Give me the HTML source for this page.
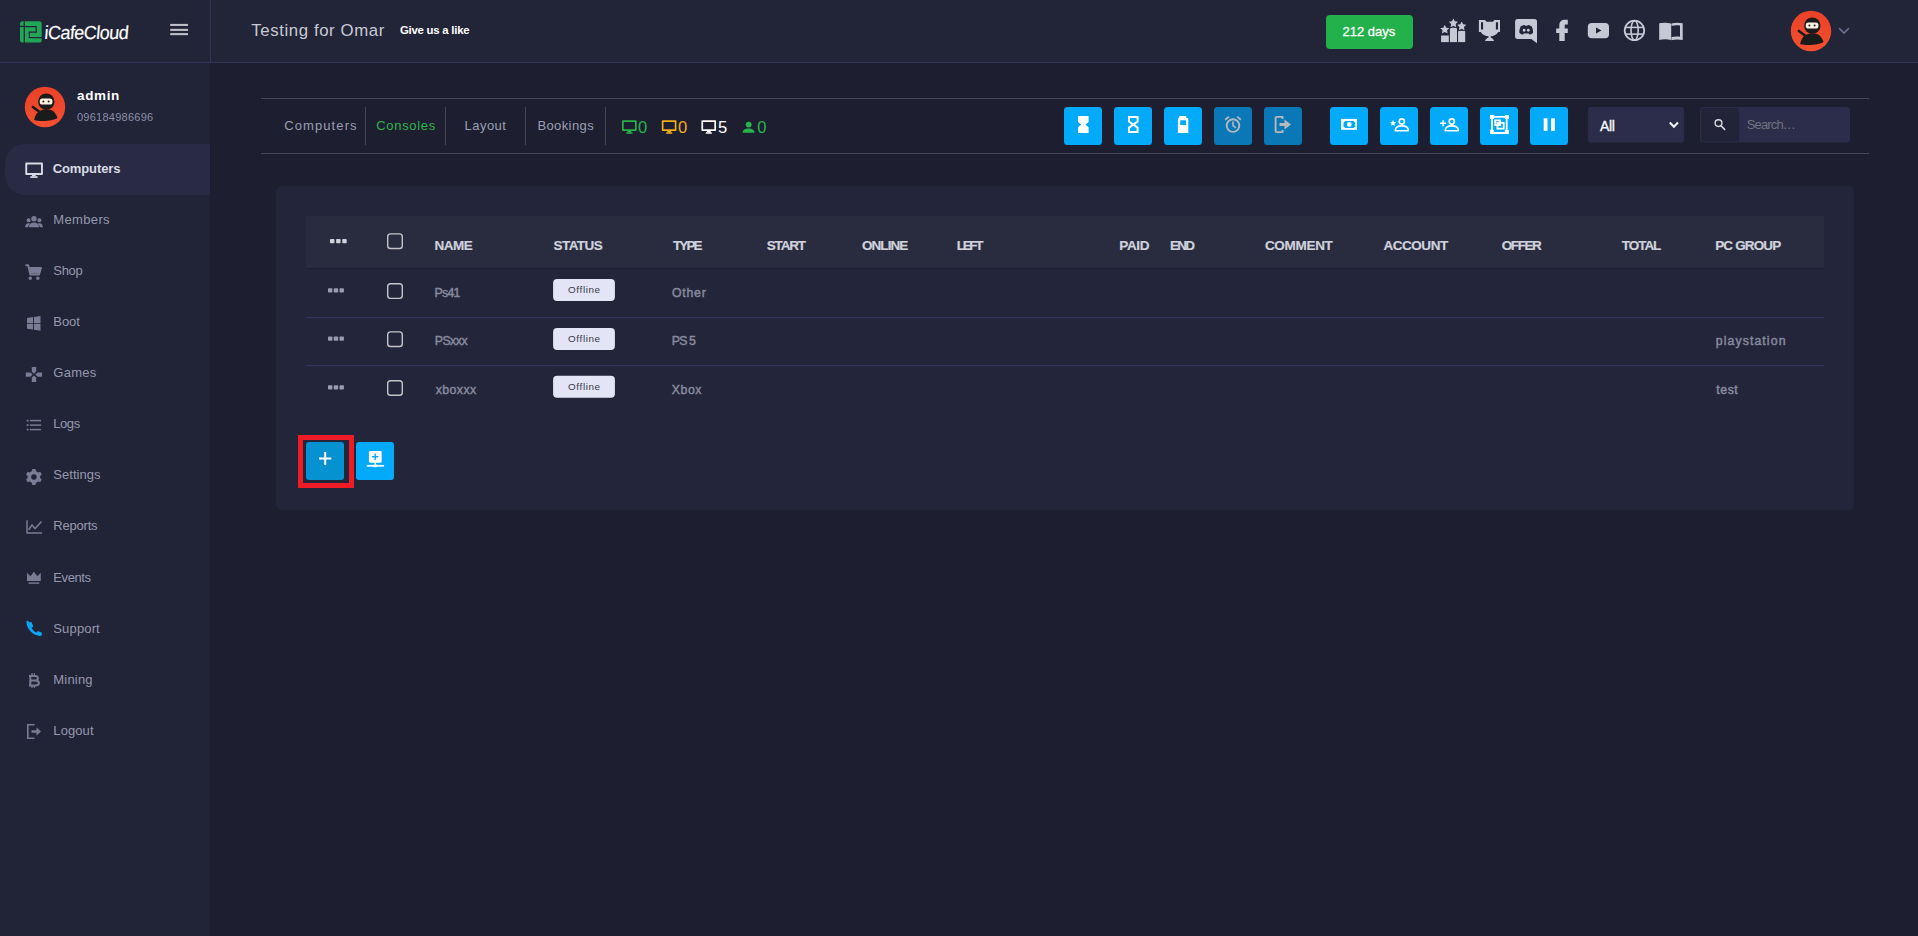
<!DOCTYPE html>
<html><head><meta charset="utf-8"><title>iCafeCloud</title>
<style>
html,body{margin:0;padding:0;}
body{width:1918px;height:936px;overflow:hidden;position:relative;background:#1d1e2f;font-family:"Liberation Sans",sans-serif;}
#t span{position:absolute;line-height:1;white-space:pre;transform-origin:0 0;}
</style></head><body>
<svg width="1918" height="936" viewBox="0 0 1918 936" style="position:absolute;left:0;top:0"><rect x="0" y="0" width="1918" height="936" rx="0" fill="#1d1e2f" /><rect x="0" y="0" width="1918" height="62" rx="0" fill="#222437" /><rect x="0" y="62" width="1918" height="1" rx="0" fill="#30335a" /><rect x="210" y="0" width="1" height="62" rx="0" fill="#30335a" /><rect x="0" y="63" width="210" height="873" rx="0" fill="#212337" /><path d="M25,144 H210 V195 H25 A20,20 0 0 1 5,175 V164 A20,20 0 0 1 25,144 Z" fill="#292b45" stroke="none" stroke-width="0" /><rect x="170.2" y="23.9" width="17.8" height="2.05" rx="0" fill="#c0c1c8" /><rect x="170.2" y="28.85" width="17.8" height="2.05" rx="0" fill="#c0c1c8" /><rect x="170.2" y="33.1" width="17.8" height="2.05" rx="0" fill="#c0c1c8" /><rect x="20" y="21.3" width="21.7" height="21.2" rx="2.6" fill="#21a556" /><path d="M24.3,20.5 V43.5 M19.5,26.4 H24.3 M24.3,26.7 H36.2 V32.1 H29.3 V37.5 H42.5" fill="none" stroke="#222437" stroke-width="1.25" /><rect x="1326" y="15" width="87" height="34" rx="4" fill="#23b14b" /><rect x="1441.1" y="35.5" width="7.7" height="6.6" rx="0" fill="#c6c9d5" /><rect x="1449.9" y="27.7" width="7.1" height="14.4" rx="0" fill="#c6c9d5" /><rect x="1458.1" y="30.8" width="7.1" height="11.3" rx="0" fill="#c6c9d5" /><polygon points="1444.80,23.70 1446.62,27.39 1450.70,27.98 1447.75,30.86 1448.44,34.92 1444.80,33.00 1441.16,34.92 1441.85,30.86 1438.90,27.98 1442.98,27.39" fill="#222437"/><polygon points="1444.80,24.80 1446.21,27.66 1449.37,28.12 1447.08,30.34 1447.62,33.48 1444.80,32.00 1441.98,33.48 1442.52,30.34 1440.23,28.12 1443.39,27.66" fill="#c6c9d5"/><polygon points="1453.40,17.40 1455.22,21.09 1459.30,21.68 1456.35,24.56 1457.04,28.62 1453.40,26.70 1449.76,28.62 1450.45,24.56 1447.50,21.68 1451.58,21.09" fill="#222437"/><polygon points="1453.40,18.50 1454.81,21.36 1457.97,21.82 1455.68,24.04 1456.22,27.18 1453.40,25.70 1450.58,27.18 1451.12,24.04 1448.83,21.82 1451.99,21.36" fill="#c6c9d5"/><polygon points="1461.70,20.40 1463.52,24.09 1467.60,24.68 1464.65,27.56 1465.34,31.62 1461.70,29.70 1458.06,31.62 1458.75,27.56 1455.80,24.68 1459.88,24.09" fill="#222437"/><polygon points="1461.70,21.50 1463.11,24.36 1466.27,24.82 1463.98,27.04 1464.52,30.18 1461.70,28.70 1458.88,30.18 1459.42,27.04 1457.13,24.82 1460.29,24.36" fill="#c6c9d5"/><path d="M1478.9,20 H1485 L1486.5,21.7 H1492.9 L1494.4,20 H1500 V31.9 H1498.2 C1497,34.5 1493.5,36 1490.8,36.3 V37.8 C1492,38 1493.5,39 1494,41 H1485 C1485.5,39 1487,38 1488.5,37.8 V36.3 C1485.5,36 1482,34.5 1480.8,31.9 H1478.9 Z M1481,22.2 V29.5 H1483.1 V22.2 Z M1495.9,22.2 V29.5 H1498 V22.2 Z" fill="#c6c9d5" stroke="none" stroke-width="0" fill-rule="evenodd"/><path d="M1517.6,18.9 H1534.5 A2.5,2.5 0 0 1 1537,21.4 V43.2 L1531.3,39.1 H1517.6 A2.5,2.5 0 0 1 1515.1,36.6 V21.4 A2.5,2.5 0 0 1 1517.6,18.9 Z" fill="#c6c9d5" stroke="none" stroke-width="0" /><path d="M1520.8,26.2 C1522.5,25.2 1524,24.9 1524.6,24.9 L1525.1,25.7 C1525.7,25.6 1526.7,25.6 1527.3,25.7 L1527.8,24.9 C1528.4,24.9 1529.9,25.2 1531.6,26.2 C1532.7,28.2 1533.2,30.4 1533,32.9 C1531.6,33.9 1530.2,34.4 1529.2,34.5 L1528.4,33.3 C1527,33.7 1525.4,33.7 1524,33.3 L1523.2,34.5 C1522.2,34.4 1520.8,33.9 1519.4,32.9 C1519.2,30.4 1519.7,28.2 1520.8,26.2 Z" fill="#222437" stroke="none" stroke-width="0" /><ellipse cx="1524.1" cy="30.3" rx="1.35" ry="1.45" fill="#c6c9d5"/><ellipse cx="1528.3" cy="30.3" rx="1.35" ry="1.45" fill="#c6c9d5"/><path d="M1559.3,41 V33 H1556.2 V28.4 H1559.3 V25.5 C1559.3,21.8 1561.5,19.8 1565,19.8 H1567.8 V24.6 H1565.8 C1565,24.6 1564.7,25 1564.7,25.8 V28.4 H1567.8 V33 H1564.7 V41 Z" fill="#c6c9d5" stroke="none" stroke-width="0" /><rect x="1587.8" y="23" width="21.2" height="15.2" rx="4" fill="#c6c9d5" /><path d="M1596,27.6 L1601.5,30.6 L1596,33.6 Z" fill="#222437" stroke="none" stroke-width="0" /><circle cx="1634.45" cy="30.45" r="9.75" fill="none" stroke="#c6c9d5" stroke-width="1.8"/><ellipse cx="1634.6" cy="30.45" rx="3.6" ry="9.75" fill="none" stroke="#c6c9d5" stroke-width="1.6"/><rect x="1625" y="26.6" width="19" height="1.6" rx="0" fill="#c6c9d5" /><rect x="1625" y="33.3" width="19" height="1.6" rx="0" fill="#c6c9d5" /><path d="M1659.2,23.2 C1662.5,22.4 1667.5,22.4 1671,23.6 V40 C1667.5,39 1662.5,39 1659.2,40 Z" fill="#c6c9d5" stroke="none" stroke-width="0" /><path d="M1671.4,23.6 C1674.5,22.5 1679,22.5 1682.7,23.2 V40 C1679,39.2 1674.5,39.2 1671.4,40.3 Z M1671.6,25.8 V37 C1674.5,36.3 1677.5,36.3 1680,36.7 V25.4 C1677.5,25 1674.5,25 1671.6,25.8 Z" fill="#c6c9d5" stroke="none" stroke-width="0" fill-rule="evenodd"/><defs><linearGradient id="g1811" x1="0" y1="0" x2="0" y2="1"><stop offset="0" stop-color="#ea4129"/><stop offset="1" stop-color="#f4502f"/></linearGradient></defs><circle cx="1811" cy="31" r="20.2" fill="url(#g1811)"/><g transform="translate(1811,31) scale(1.01)"><line x1="-12" y1="0" x2="-6" y2="4.5" stroke="#1b1b1b" stroke-width="2.6" stroke-linecap="round"/><circle cx="1.3" cy="-5.3" r="8.1" fill="#1b1b1b"/><path d="M-10.8,12.8 C-9.5,5.5 -4.5,2.2 1.3,2.2 C7,2.2 11.2,5.5 12.3,11 C8,14 -5,14.8 -10.8,12.8 Z" fill="#1b1b1b"/><rect x="-5.2" y="-8.4" width="12.6" height="6" rx="2.6" fill="#fbf1e1"/><circle cx="-1.6" cy="-5.4" r="1" fill="#1b1b1b"/><circle cx="3.6" cy="-5.4" r="1" fill="#1b1b1b"/></g><defs><linearGradient id="g45" x1="0" y1="0" x2="0" y2="1"><stop offset="0" stop-color="#ea4129"/><stop offset="1" stop-color="#f4502f"/></linearGradient></defs><circle cx="45" cy="107" r="20.2" fill="url(#g45)"/><g transform="translate(45,107) scale(1.01)"><line x1="-12" y1="0" x2="-6" y2="4.5" stroke="#1b1b1b" stroke-width="2.6" stroke-linecap="round"/><circle cx="1.3" cy="-5.3" r="8.1" fill="#1b1b1b"/><path d="M-10.8,12.8 C-9.5,5.5 -4.5,2.2 1.3,2.2 C7,2.2 11.2,5.5 12.3,11 C8,14 -5,14.8 -10.8,12.8 Z" fill="#1b1b1b"/><rect x="-5.2" y="-8.4" width="12.6" height="6" rx="2.6" fill="#fbf1e1"/><circle cx="-1.6" cy="-5.4" r="1" fill="#1b1b1b"/><circle cx="3.6" cy="-5.4" r="1" fill="#1b1b1b"/></g><path d="M1839.2,28.2 L1844,33 L1848.8,28.2" fill="none" stroke="#6b7290" stroke-width="1.6" /><path d="M26.25,163.45 H41.95 V173.95 H26.25 Z" fill="none" stroke="#d9dbe6" stroke-width="1.9" stroke-linejoin="round"/><rect x="32" y="174.8" width="3.7" height="1.5" rx="0" fill="#d9dbe6" /><rect x="30.3" y="176.2" width="7.3" height="1.7" rx="0" fill="#d9dbe6" /><circle cx="34" cy="218.7" r="2.7" fill="#787c94"/><circle cx="28.6" cy="220.3" r="2" fill="#787c94"/><circle cx="39.4" cy="220.3" r="2" fill="#787c94"/><path d="M28.8,227.3 C29.2,224 31.5,222.6 34,222.6 C36.5,222.6 38.8,224 39.2,227.3 Z" fill="#787c94" stroke="none" stroke-width="0" /><path d="M25,227.3 C25.3,224.8 26.5,223.3 28.5,223.3 C29.5,223.3 30,223.5 30.3,223.7 C29,224.8 28.3,226 28.1,227.3 Z" fill="#787c94" stroke="none" stroke-width="0" /><path d="M43,227.3 C42.7,224.8 41.5,223.3 39.5,223.3 C38.5,223.3 38,223.5 37.7,223.7 C39,224.8 39.7,226 39.9,227.3 Z" fill="#787c94" stroke="none" stroke-width="0" /><path d="M25.5,265.3 H28.2 L30.3,274.5 H39 L41,268 H29" fill="none" stroke="#787c94" stroke-width="1.9" stroke-linejoin="round"/><path d="M29,268 H41 L39.2,273.5 H30.3 Z" fill="#787c94" stroke="none" stroke-width="0" /><circle cx="30.3" cy="278.2" r="1.7" fill="#787c94"/><circle cx="37.8" cy="278.2" r="1.7" fill="#787c94"/><path d="M27,318 L33,317.1 V322.9 H27 Z M33.9,317 L40.5,316 V322.9 H33.9 Z M27,323.8 H33 V329.6 L27,328.7 Z M33.9,323.8 H40.5 V330.7 L33.9,329.7 Z" fill="#787c94" stroke="none" stroke-width="0" /><path d="M31.8,367 H36.2 V371.6 L34,373.8 L31.8,371.6 Z M31.8,382 H36.2 V377.6 L34,375.4 L31.8,377.6 Z M25.8,372.4 H30.4 L32.6,374.6 L30.4,376.8 H25.8 Z M42,372.4 H37.6 L35.4,374.6 L37.6,376.8 H42 Z" fill="#787c94" stroke="none" stroke-width="0" /><rect x="26.7" y="419.70000000000005" width="1.8" height="1.8" rx="0" fill="#787c94" /><rect x="29.8" y="419.85" width="11.3" height="1.5" rx="0" fill="#787c94" /><rect x="26.7" y="424.20000000000005" width="1.8" height="1.8" rx="0" fill="#787c94" /><rect x="29.8" y="424.35" width="11.3" height="1.5" rx="0" fill="#787c94" /><rect x="26.7" y="428.70000000000005" width="1.8" height="1.8" rx="0" fill="#787c94" /><rect x="29.8" y="428.85" width="11.3" height="1.5" rx="0" fill="#787c94" /><g transform="translate(33.9,476.5)"><path d="M-1.6,-7.5 H1.6 L2.1,-5.3 C2.9,-5 3.6,-4.6 4.2,-4.1 L6.3,-4.8 L7.9,-2.1 L6.2,-0.6 C6.3,0.2 6.3,0.9 6.2,1.6 L7.9,3.1 L6.3,5.8 L4.2,5.1 C3.6,5.6 2.9,6 2.1,6.3 L1.6,8.5 H-1.6 L-2.1,6.3 C-2.9,6 -3.6,5.6 -4.2,5.1 L-6.3,5.8 L-7.9,3.1 L-6.2,1.6 C-6.3,0.9 -6.3,0.2 -6.2,-0.6 L-7.9,-2.1 L-6.3,-4.8 L-4.2,-4.1 C-3.6,-4.6 -2.9,-5 -2.1,-5.3 Z M0,-2.3 A2.8,2.8 0 1 0 0.01,-2.3 Z" fill="#787c94" fill-rule="evenodd"/></g><path d="M27,520.3 V533 H42" fill="none" stroke="#787c94" stroke-width="1.5" /><path d="M28.5,530 L32,525 L35,528.5 L41.5,521.5" fill="none" stroke="#787c94" stroke-width="1.5" /><path d="M27,572.8 L30.5,576.3 L33.9,571.8 L37.3,576.3 L40.8,572.8 V581 H27 Z" fill="#787c94" stroke="none" stroke-width="0" /><rect x="28.5" y="582.4" width="10.8" height="1.4" rx="0" fill="#787c94" /><path d="M29.4,622.2 L31.4,622 L33.3,626.2 L31.6,627.8 C32.6,629.9 34.2,631.6 36.3,632.6 L37.9,630.9 L42,632.8 L41.8,634.8 C41.6,635.6 41,636 40.2,636 C32.7,635.6 26.8,629.5 26.5,622.1 C26.5,621.3 27,620.8 27.8,620.6 Z" fill="#0ba5f4" stroke="none" stroke-width="0" /><path d="M30.3,675.2 V686.2 M29,676 H35 C36.9,676 37.9,676.9 37.9,678.3 C37.9,679.7 36.9,680.6 35,680.6 H30.3 M30.3,680.6 H35.6 C37.8,680.6 38.9,681.6 38.9,683.1 C38.9,684.6 37.8,685.5 35.6,685.5 H29" fill="none" stroke="#787c94" stroke-width="2" /><rect x="31.3" y="673.1" width="1.3" height="2.4" rx="0" fill="#787c94" /><rect x="33.7" y="673.1" width="1.3" height="2.4" rx="0" fill="#787c94" /><rect x="31.3" y="685.5" width="1.3" height="2.4" rx="0" fill="#787c94" /><rect x="33.7" y="685.5" width="1.3" height="2.4" rx="0" fill="#787c94" /><path d="M34.5,724.8 H27.8 V738.2 H34.5" fill="none" stroke="#787c94" stroke-width="1.6" /><path d="M31.5,730.2 H36.5 V727.3 L41,731.5 L36.5,735.7 V732.8 H31.5 Z" fill="#787c94" stroke="none" stroke-width="0" /><rect x="261" y="98" width="1608" height="1" rx="0" fill="#454757" /><rect x="261" y="153" width="1608" height="1" rx="0" fill="#454757" /><rect x="365" y="107" width="1" height="38" rx="0" fill="#484a5a" /><rect x="445" y="107" width="1" height="38" rx="0" fill="#484a5a" /><rect x="525" y="107" width="1" height="38" rx="0" fill="#484a5a" /><rect x="605" y="107" width="1" height="38" rx="0" fill="#484a5a" /><path d="M622.85,121.05 H635.8 V130.04999999999998 H622.85 Z" fill="none" stroke="#27b34a" stroke-width="1.7" stroke-linejoin="round"/><rect x="627.5" y="131.0" width="3.8" height="1.4" rx="0" fill="#27b34a" /><rect x="626.3" y="132.29999999999998" width="6.2" height="1.5" rx="0.5" fill="#27b34a" /><path d="M662.6500000000001,121.05 H675.6 V130.04999999999998 H662.6500000000001 Z" fill="none" stroke="#f4ad1a" stroke-width="1.7" stroke-linejoin="round"/><rect x="667.3000000000001" y="131.0" width="3.8" height="1.4" rx="0" fill="#f4ad1a" /><rect x="666.1" y="132.29999999999998" width="6.2" height="1.5" rx="0.5" fill="#f4ad1a" /><path d="M702.25,121.05 H715.1999999999999 V130.04999999999998 H702.25 Z" fill="none" stroke="#ffffff" stroke-width="1.7" stroke-linejoin="round"/><rect x="706.9" y="131.0" width="3.8" height="1.4" rx="0" fill="#ffffff" /><rect x="705.6999999999999" y="132.29999999999998" width="6.2" height="1.5" rx="0.5" fill="#ffffff" /><circle cx="748.7" cy="124.6" r="2.95" fill="#27b34a"/><path d="M742.6,132.7 C742.8,129.6 745.5,128.4 748.6,128.4 C751.7,128.4 754.4,129.6 754.6,132.7 Z" fill="#27b34a" stroke="none" stroke-width="0" /><rect x="1064" y="107" width="38" height="38" rx="3.5" fill="#03aaf9" /><rect x="1114" y="107" width="38" height="38" rx="3.5" fill="#03aaf9" /><rect x="1164" y="107" width="38" height="38" rx="3.5" fill="#03aaf9" /><rect x="1214" y="107" width="38" height="38" rx="3.5" fill="#0a78b6" /><rect x="1264" y="107" width="38" height="38" rx="3.5" fill="#0a78b6" /><rect x="1330" y="107" width="38" height="38" rx="3.5" fill="#03aaf9" /><rect x="1380" y="107" width="38" height="38" rx="3.5" fill="#03aaf9" /><rect x="1430" y="107" width="38" height="38" rx="3.5" fill="#03aaf9" /><rect x="1480" y="107" width="38" height="38" rx="3.5" fill="#03aaf9" /><rect x="1530" y="107" width="38" height="38" rx="3.5" fill="#03aaf9" /><path d="M1078,116.1 H1088.6 V121.9 L1085.4,124.6 L1088.6,127.3 V133 H1078 V127.3 L1081.2,124.6 L1078,121.9 Z" fill="#ffffff" stroke="none" stroke-width="0" /><path d="M1129,117.1 H1137.6 V121.6 L1133.3,124.6 L1137.6,127.6 V132 H1129 V127.6 L1133.3,124.6 L1129,121.6 Z" fill="none" stroke="#ffffff" stroke-width="2" /><rect x="1179.2" y="116.1" width="7.1" height="2.4" rx="0.6" fill="#ffffff" /><path d="M1179,118.1 H1187.2 A1.1,1.1 0 0 1 1188.3,119.2 V133 H1177.9 V119.2 A1.1,1.1 0 0 1 1179,118.1 Z M1180.2,120.2 V124.9 H1186.1 V120.2 Z" fill="#ffffff" stroke="none" stroke-width="0" fill-rule="evenodd"/><circle cx="1233" cy="125.6" r="6.3" fill="none" stroke="#b6b8bd" stroke-width="1.9"/><path d="M1233,121.6 V125.6 L1235.8,127.8" fill="none" stroke="#b6b8bd" stroke-width="1.7" /><path d="M1225.2,119.8 L1228.9,116.6" fill="none" stroke="#b6b8bd" stroke-width="1.9" /><path d="M1240.8,119.8 L1237.1,116.6" fill="none" stroke="#b6b8bd" stroke-width="1.9" /><path d="M1282.5,116.9 H1276.6 A1,1 0 0 0 1275.6,117.9 V131.1 A1,1 0 0 0 1276.6,132.1 H1282.5 V130" fill="none" stroke="#b6b8bd" stroke-width="1.9" /><path d="M1282.5,116 V119" fill="none" stroke="#b6b8bd" stroke-width="1.9" /><path d="M1279.5,122.9 H1284.5 V119.6 L1291,124.5 L1284.5,129.4 V126.1 H1279.5 Z" fill="#b6b8bd" stroke="none" stroke-width="0" /><rect x="1341.1" y="118.9" width="15.9" height="10.9" rx="0" fill="#ffffff" /><path d="M1345.2,120.9 H1353.5 L1355.2,122.7 V126.2 L1353.5,128 H1345.2 L1343.5,126.2 V122.7 Z" fill="#03aaf9" stroke="none" stroke-width="0" /><circle cx="1349.3" cy="124.4" r="2.35" fill="#ffffff"/><circle cx="1401.8" cy="121.5" r="2.6" fill="none" stroke="#fff" stroke-width="1.6"/><path d="M1395.2,130.8 C1395.2,127.0 1398.8,125.9 1401.8,125.9 C1404.8,125.9 1408.3999999999999,127.0 1408.3999999999999,130.8 Z" fill="none" stroke="#fff" stroke-width="1.6" stroke-linejoin="round"/><polygon points="1393.00,120.00 1393.85,122.04 1396.04,122.21 1394.37,123.64 1394.88,125.79 1393.00,124.64 1391.12,125.79 1391.63,123.64 1389.96,122.21 1392.15,122.04" fill="#ffffff"/><circle cx="1451.8" cy="121.5" r="2.6" fill="none" stroke="#fff" stroke-width="1.6"/><path d="M1445.2,130.8 C1445.2,127.0 1448.8,125.9 1451.8,125.9 C1454.8,125.9 1458.3999999999999,127.0 1458.3999999999999,130.8 Z" fill="none" stroke="#fff" stroke-width="1.6" stroke-linejoin="round"/><rect x="1440" y="122.5" width="6.2" height="1.5" rx="0" fill="#ffffff" /><rect x="1442.35" y="120.2" width="1.5" height="6.1" rx="0" fill="#ffffff" /><path d="M1492,116.9 H1506.7 V133 H1492 Z" fill="none" stroke="#ffffff" stroke-width="1.8" /><rect x="1490" y="115" width="4" height="4" rx="0" fill="#ffffff" /><rect x="1504.9" y="115" width="4" height="4" rx="0" fill="#ffffff" /><rect x="1490" y="129.9" width="4" height="4" rx="0" fill="#ffffff" /><rect x="1504.9" y="129.9" width="4" height="4" rx="0" fill="#ffffff" /><path d="M1495.2,120.4 H1500.1 V125.1 H1495.2 Z" fill="none" stroke="#ffffff" stroke-width="1.8" /><path d="M1497.4,122.9 H1503.7 V128.7 H1497.4 Z" fill="none" stroke="#ffffff" stroke-width="1.8" /><rect x="1497.4" y="122.9" width="2.7" height="2.2" rx="0" fill="#ffffff" /><rect x="1543.7" y="118.3" width="3.8" height="12.6" rx="0" fill="#ffffff" /><rect x="1551.1" y="118.3" width="3.8" height="12.6" rx="0" fill="#ffffff" /><rect x="1588" y="107" width="96" height="35.5" rx="3" fill="#2b2d4a" /><path d="M1669.8,122.6 L1673.9,126.8 L1678,122.6" fill="none" stroke="#f4f4f4" stroke-width="2.1" /><rect x="1700" y="107" width="150" height="35.5" rx="3" fill="#2b2d4a" /><rect x="1701" y="108" width="38.2" height="33.5" rx="2" fill="#222338" /><circle cx="1718.5" cy="123.1" r="3.4" fill="none" stroke="#d8dae0" stroke-width="1.4"/><path d="M1721,125.8 L1724.6,129.4" fill="none" stroke="#d8dae0" stroke-width="1.6" stroke-linecap="round"/><rect x="276" y="186" width="1578" height="324" rx="6" fill="#23253a" /><rect x="306" y="216" width="1518" height="52" rx="0" fill="#292b3f" /><rect x="306" y="268" width="1518" height="1" rx="0" fill="#1d1e2e" /><rect x="306" y="317" width="1518" height="1" rx="0" fill="#31335a" /><rect x="306" y="365" width="1518" height="1" rx="0" fill="#31335a" /><rect x="330.0" y="238.9" width="4.4" height="4.4" rx="0.8" fill="#d0d2dc" /><rect x="336.15" y="238.9" width="4.4" height="4.4" rx="0.8" fill="#d0d2dc" /><rect x="342.3" y="238.9" width="4.4" height="4.4" rx="0.8" fill="#d0d2dc" /><rect x="328.0" y="288.2" width="4.4" height="4.4" rx="0.8" fill="#9a9db0" /><rect x="333.75" y="288.2" width="4.4" height="4.4" rx="0.8" fill="#9a9db0" /><rect x="339.5" y="288.2" width="4.4" height="4.4" rx="0.8" fill="#9a9db0" /><rect x="328.0" y="336.4" width="4.4" height="4.4" rx="0.8" fill="#9a9db0" /><rect x="333.75" y="336.4" width="4.4" height="4.4" rx="0.8" fill="#9a9db0" /><rect x="339.5" y="336.4" width="4.4" height="4.4" rx="0.8" fill="#9a9db0" /><rect x="328.0" y="385.2" width="4.4" height="4.4" rx="0.8" fill="#9a9db0" /><rect x="333.75" y="385.2" width="4.4" height="4.4" rx="0.8" fill="#9a9db0" /><rect x="339.5" y="385.2" width="4.4" height="4.4" rx="0.8" fill="#9a9db0" /><rect x="387.7" y="233.89999999999998" width="14.6" height="14.6" rx="2.8" fill="none" stroke="#c4c4c8" stroke-width="1.4"/><rect x="387.7" y="283.8" width="14.6" height="14.6" rx="2.8" fill="none" stroke="#c4c4c8" stroke-width="1.4"/><rect x="387.7" y="331.9" width="14.6" height="14.6" rx="2.8" fill="none" stroke="#c4c4c8" stroke-width="1.4"/><rect x="387.7" y="380.7" width="14.6" height="14.6" rx="2.8" fill="none" stroke="#c4c4c8" stroke-width="1.4"/><rect x="553.1" y="279" width="61.8" height="22" rx="4" fill="#e3e5f7" /><rect x="553.1" y="328" width="61.8" height="22" rx="4" fill="#e3e5f7" /><rect x="553.1" y="375.8" width="61.8" height="22" rx="4" fill="#e3e5f7" /><path d="M300.5,437.5 H351.5 V485.5 H300.5 Z" fill="none" stroke="#ee1c24" stroke-width="5" /><rect x="306" y="442" width="38" height="38" rx="3" fill="#0691d1" /><rect x="319" y="457.5" width="12.3" height="2" rx="0" fill="#ffffff" /><rect x="324.2" y="452" width="2" height="12.9" rx="0" fill="#ffffff" /><rect x="356" y="442" width="38" height="38" rx="3" fill="#03aaf9" /><rect x="368.9" y="451" width="12.8" height="11.7" rx="1.4" fill="#ffffff" /><rect x="374.5" y="453.5" width="1.4" height="6.5" rx="0" fill="#03aaf9" /><rect x="372" y="456" width="6.4" height="1.4" rx="0" fill="#03aaf9" /><rect x="374.6" y="462" width="1.4" height="3" rx="0" fill="#ffffff" /><rect x="366.7" y="464.9" width="17.4" height="1.8" rx="0" fill="#ffffff" /><ellipse cx="375.3" cy="465.8" rx="2.4" ry="1.5" fill="#fff"/></svg>
<div id="t">
<span style="left:251.3px;top:23.3px;font-size:16.8px;font-weight:400;color:#c8cad5;letter-spacing:0.6px;font-style:normal;">Testing for Omar</span>
<span style="left:400.0px;top:25.2px;font-size:11.4px;font-weight:700;color:#ffffff;letter-spacing:-0.25px;font-style:normal;">Give us a like</span>
<span style="left:1342.5px;top:24.8px;font-size:13px;font-weight:400;color:#ffffff;letter-spacing:0.0px;font-style:normal;-webkit-text-stroke:0.3px #ffffff;">212 days</span>
<span style="left:77.0px;top:88.8px;font-size:13.5px;font-weight:700;color:#ffffff;letter-spacing:0.65px;font-style:normal;">admin</span>
<span style="left:77.0px;top:111.7px;font-size:11px;font-weight:400;color:#8b90a7;letter-spacing:0.25px;font-style:normal;">096184986696</span>
<span style="left:52.7px;top:162.1px;font-size:13px;font-weight:700;color:#d9dbe6;letter-spacing:-0.1px;font-style:normal;">Computers</span>
<span style="left:53.3px;top:213.15px;font-size:13px;font-weight:400;color:#9699ae;letter-spacing:0.35px;font-style:normal;">Members</span>
<span style="left:53.3px;top:264.2px;font-size:13px;font-weight:400;color:#9699ae;letter-spacing:-0.3px;font-style:normal;">Shop</span>
<span style="left:53.3px;top:315.25px;font-size:13px;font-weight:400;color:#9699ae;letter-spacing:-0.05px;font-style:normal;">Boot</span>
<span style="left:53.3px;top:366.3px;font-size:13px;font-weight:400;color:#9699ae;letter-spacing:0.25px;font-style:normal;">Games</span>
<span style="left:53.3px;top:417.35px;font-size:13px;font-weight:400;color:#9699ae;letter-spacing:-0.45px;font-style:normal;">Logs</span>
<span style="left:53.3px;top:468.4px;font-size:13px;font-weight:400;color:#9699ae;letter-spacing:0.05px;font-style:normal;">Settings</span>
<span style="left:53.3px;top:519.45px;font-size:13px;font-weight:400;color:#9699ae;letter-spacing:-0.2px;font-style:normal;">Reports</span>
<span style="left:53.3px;top:570.5px;font-size:13px;font-weight:400;color:#9699ae;letter-spacing:-0.4px;font-style:normal;">Events</span>
<span style="left:53.3px;top:621.55px;font-size:13px;font-weight:400;color:#9699ae;letter-spacing:0.15px;font-style:normal;">Support</span>
<span style="left:53.3px;top:672.6px;font-size:13px;font-weight:400;color:#9699ae;letter-spacing:0.2px;font-style:normal;">Mining</span>
<span style="left:53.3px;top:723.65px;font-size:13px;font-weight:400;color:#9699ae;letter-spacing:0.1px;font-style:normal;">Logout</span>
<span style="left:284.2px;top:119.0px;font-size:13px;font-weight:400;color:#9b9eb1;letter-spacing:1.1px;font-style:normal;">Computers</span>
<span style="left:376.2px;top:119.0px;font-size:13px;font-weight:400;color:#2cb54b;letter-spacing:0.7px;font-style:normal;">Consoles</span>
<span style="left:464.6px;top:119.0px;font-size:13px;font-weight:400;color:#9b9eb1;letter-spacing:0.45px;font-style:normal;">Layout</span>
<span style="left:537.4px;top:119.0px;font-size:13px;font-weight:400;color:#9b9eb1;letter-spacing:0.4px;font-style:normal;">Bookings</span>
<span style="left:638.0px;top:119.85px;font-size:16.6px;font-weight:400;color:#27b34a;letter-spacing:0px;font-style:normal;">0</span>
<span style="left:678.0px;top:119.85px;font-size:16.6px;font-weight:400;color:#f4ad1a;letter-spacing:0px;font-style:normal;">0</span>
<span style="left:718.0px;top:119.85px;font-size:16.6px;font-weight:400;color:#ffffff;letter-spacing:0px;font-style:normal;">5</span>
<span style="left:757.2px;top:119.85px;font-size:16.6px;font-weight:400;color:#27b34a;letter-spacing:0px;font-style:normal;">0</span>
<span style="left:1599.9px;top:119.2px;font-size:14px;font-weight:400;color:#ffffff;letter-spacing:-0.3px;font-style:normal;-webkit-text-stroke:0.3px #ffffff;">All</span>
<span style="left:1746.7px;top:118.1px;font-size:13px;font-weight:400;color:#70717f;letter-spacing:-0.85px;font-style:normal;">Search…</span>
<span style="left:434.5px;top:239.4px;font-size:13.5px;font-weight:700;color:#cfd1dc;letter-spacing:-0.5px;font-style:normal;-webkit-text-stroke:0.2px #cfd1dc;">NAME</span>
<span style="left:553.5px;top:239.4px;font-size:13.5px;font-weight:700;color:#cfd1dc;letter-spacing:-0.55px;font-style:normal;-webkit-text-stroke:0.2px #cfd1dc;">STATUS</span>
<span style="left:672.9px;top:239.4px;font-size:13.5px;font-weight:700;color:#cfd1dc;letter-spacing:-1.85px;font-style:normal;-webkit-text-stroke:0.2px #cfd1dc;">TYPE</span>
<span style="left:766.8px;top:239.4px;font-size:13.5px;font-weight:700;color:#cfd1dc;letter-spacing:-1.2px;font-style:normal;-webkit-text-stroke:0.2px #cfd1dc;">START</span>
<span style="left:862.0px;top:239.4px;font-size:13.5px;font-weight:700;color:#cfd1dc;letter-spacing:-0.95px;font-style:normal;-webkit-text-stroke:0.2px #cfd1dc;">ONLINE</span>
<span style="left:956.7px;top:239.4px;font-size:13.5px;font-weight:700;color:#cfd1dc;letter-spacing:-2.3px;font-style:normal;-webkit-text-stroke:0.2px #cfd1dc;">LEFT</span>
<span style="left:1119.3px;top:239.4px;font-size:13.5px;font-weight:700;color:#cfd1dc;letter-spacing:-0.35px;font-style:normal;-webkit-text-stroke:0.2px #cfd1dc;">PAID</span>
<span style="left:1170.1px;top:239.4px;font-size:13.5px;font-weight:700;color:#cfd1dc;letter-spacing:-1.75px;font-style:normal;-webkit-text-stroke:0.2px #cfd1dc;">END</span>
<span style="left:1264.9px;top:239.4px;font-size:13.5px;font-weight:700;color:#cfd1dc;letter-spacing:-0.3px;font-style:normal;-webkit-text-stroke:0.2px #cfd1dc;">COMMENT</span>
<span style="left:1383.4px;top:239.4px;font-size:13.5px;font-weight:700;color:#cfd1dc;letter-spacing:-0.45px;font-style:normal;-webkit-text-stroke:0.2px #cfd1dc;">ACCOUNT</span>
<span style="left:1501.8px;top:239.4px;font-size:13.5px;font-weight:700;color:#cfd1dc;letter-spacing:-1.45px;font-style:normal;-webkit-text-stroke:0.2px #cfd1dc;">OFFER</span>
<span style="left:1621.8px;top:239.4px;font-size:13.5px;font-weight:700;color:#cfd1dc;letter-spacing:-1.05px;font-style:normal;-webkit-text-stroke:0.2px #cfd1dc;">TOTAL</span>
<span style="left:1715.2px;top:239.4px;font-size:13.5px;font-weight:700;color:#cfd1dc;letter-spacing:-0.85px;font-style:normal;-webkit-text-stroke:0.2px #cfd1dc;">PC GROUP</span>
<span style="left:434.5px;top:287.0px;font-size:12.3px;font-weight:400;color:#878a9e;letter-spacing:-0.7px;font-style:normal;-webkit-text-stroke:0.45px #878a9e;">Ps41</span>
<span style="left:671.9px;top:287.0px;font-size:12.3px;font-weight:400;color:#878a9e;letter-spacing:0.8px;font-style:normal;-webkit-text-stroke:0.45px #878a9e;">Other</span>
<span style="left:434.7px;top:335.0px;font-size:12.3px;font-weight:400;color:#878a9e;letter-spacing:-0.5px;font-style:normal;-webkit-text-stroke:0.45px #878a9e;">PSxxx</span>
<span style="left:671.8px;top:335.0px;font-size:12.3px;font-weight:400;color:#878a9e;letter-spacing:-0.85px;font-style:normal;-webkit-text-stroke:0.45px #878a9e;">PS 5</span>
<span style="left:1715.7px;top:335.1px;font-size:12.3px;font-weight:400;color:#878a9e;letter-spacing:1.1px;font-style:normal;-webkit-text-stroke:0.45px #878a9e;">playstation</span>
<span style="left:435.7px;top:384.2px;font-size:12.3px;font-weight:400;color:#878a9e;letter-spacing:0.45px;font-style:normal;-webkit-text-stroke:0.45px #878a9e;">xboxxx</span>
<span style="left:671.8px;top:384.2px;font-size:12.3px;font-weight:400;color:#878a9e;letter-spacing:0.55px;font-style:normal;-webkit-text-stroke:0.45px #878a9e;">Xbox</span>
<span style="left:1716.3px;top:384.0px;font-size:12.3px;font-weight:400;color:#878a9e;letter-spacing:0.55px;font-style:normal;-webkit-text-stroke:0.45px #878a9e;">test</span>
<span style="left:568.1px;top:285.0px;font-size:9.9px;font-weight:400;color:#383a48;letter-spacing:0.6px;font-style:normal;">Offline</span>
<span style="left:568.1px;top:333.8px;font-size:9.9px;font-weight:400;color:#383a48;letter-spacing:0.6px;font-style:normal;">Offline</span>
<span style="left:568.1px;top:381.9px;font-size:9.9px;font-weight:400;color:#383a48;letter-spacing:0.6px;font-style:normal;">Offline</span>
<span style="left:44.30px;top:23.80px;font-size:18.8px;color:#fff;letter-spacing:-0.6px;transform-origin:0 15.0px;transform:skewX(-5deg) scaleX(0.9621);-webkit-text-stroke:0.15px #fff">iCafeCloud</span>
</div>
</body></html>
